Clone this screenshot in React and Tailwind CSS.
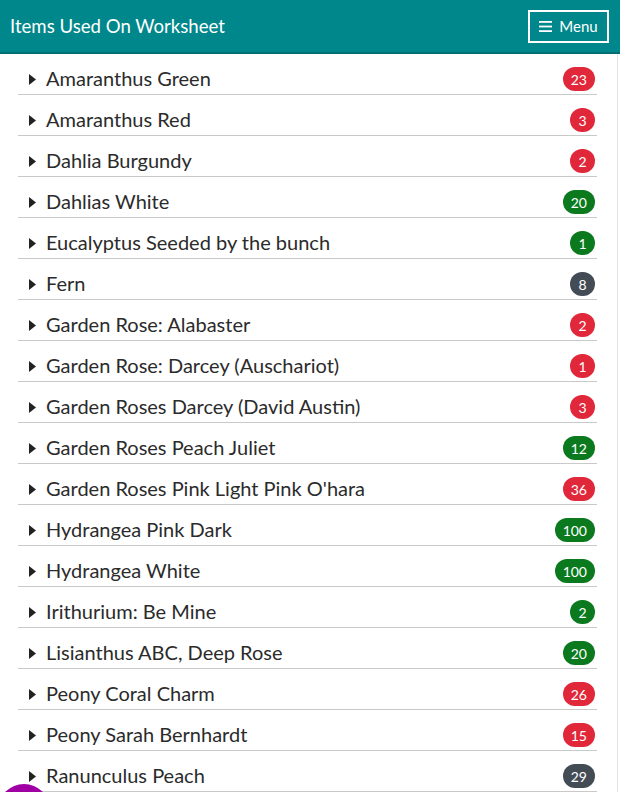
import React from 'react';

const items = [
  ['Amaranthus Green', 23, 'red'],
  ['Amaranthus Red', 3, 'red'],
  ['Dahlia Burgundy', 2, 'red'],
  ['Dahlias White', 20, 'green'],
  ['Eucalyptus Seeded by the bunch', 1, 'green'],
  ['Fern', 8, 'gray'],
  ['Garden Rose: Alabaster', 2, 'red'],
  ['Garden Rose: Darcey (Auschariot)', 1, 'red'],
  ['Garden Roses Darcey (David Austin)', 3, 'red'],
  ['Garden Roses Peach Juliet', 12, 'green'],
  ["Garden Roses Pink Light Pink O'hara", 36, 'red'],
  ['Hydrangea Pink Dark', 100, 'green'],
  ['Hydrangea White', 100, 'green'],
  ['Irithurium: Be Mine', 2, 'green'],
  ['Lisianthus ABC, Deep Rose', 20, 'green'],
  ['Peony Coral Charm', 26, 'red'],
  ['Peony Sarah Bernhardt', 15, 'red'],
  ['Ranunculus Peach', 29, 'gray'],
];

const badgeColors = {
  red: 'bg-[#e0283a]',
  green: 'bg-[#0b7a1f]',
  gray: 'bg-[#434b55]',
};

const App = () => {
  return (
    <div className="relative h-[792px] w-[620px] overflow-hidden bg-white font-['Lato','Open_Sans',sans-serif]">
      {/* Header */}
      <header className="flex h-[54px] items-center justify-between border-b-2 border-[#016f73] bg-[#00878b] pl-[10px] pr-[11px]">
        <h1 className="pt-[1px] text-[18.6px] text-white">Items Used On Worksheet</h1>
        <button className="flex h-[33px] w-[81px] items-center justify-center gap-[7px] border-2 border-white text-[15px] text-white">
          <svg width="13" height="11" viewBox="0 0 13 11" fill="white">
            <rect x="0" y="0" width="13" height="1.8" />
            <rect x="0" y="4.6" width="13" height="1.8" />
            <rect x="0" y="9.2" width="13" height="1.8" />
          </svg>
          Menu
        </button>
      </header>

      <div className="flex">
        <main className="flex-1 pl-[18px] pr-[20px]">
          {items.map(([name, count, color]) => (
            <div key={name} className="flex h-[41px] items-center justify-between border-b border-[#c9c9c9] pl-[11px] pr-[2px]">
              <div className="flex items-center gap-[10px] pt-[7px]">
                <svg className="mt-[3px]" width="7" height="11" viewBox="0 0 7 11" fill="#222">
                  <path d="M0 0 L7 5.5 L0 11 Z" />
                </svg>
                <span className="text-[20px] text-[#2b2b2b]">{name}</span>
              </div>
              <span className={`mt-[10px] flex h-[24px] min-w-[25px] items-center justify-center rounded-full px-[8px] text-[14px] text-white ${badgeColors[color]}`}>
                {count}
              </span>
            </div>
          ))}
        </main>
        <div className="w-[3px] border-l border-[#e4e4e4]" />
      </div>

      {/* floating button peeking from bottom */}
      <div className="absolute left-[-2px] top-[784px] h-[52px] w-[52px] rounded-full bg-[#a000a3]" />
    </div>
  );
};

export default App;
